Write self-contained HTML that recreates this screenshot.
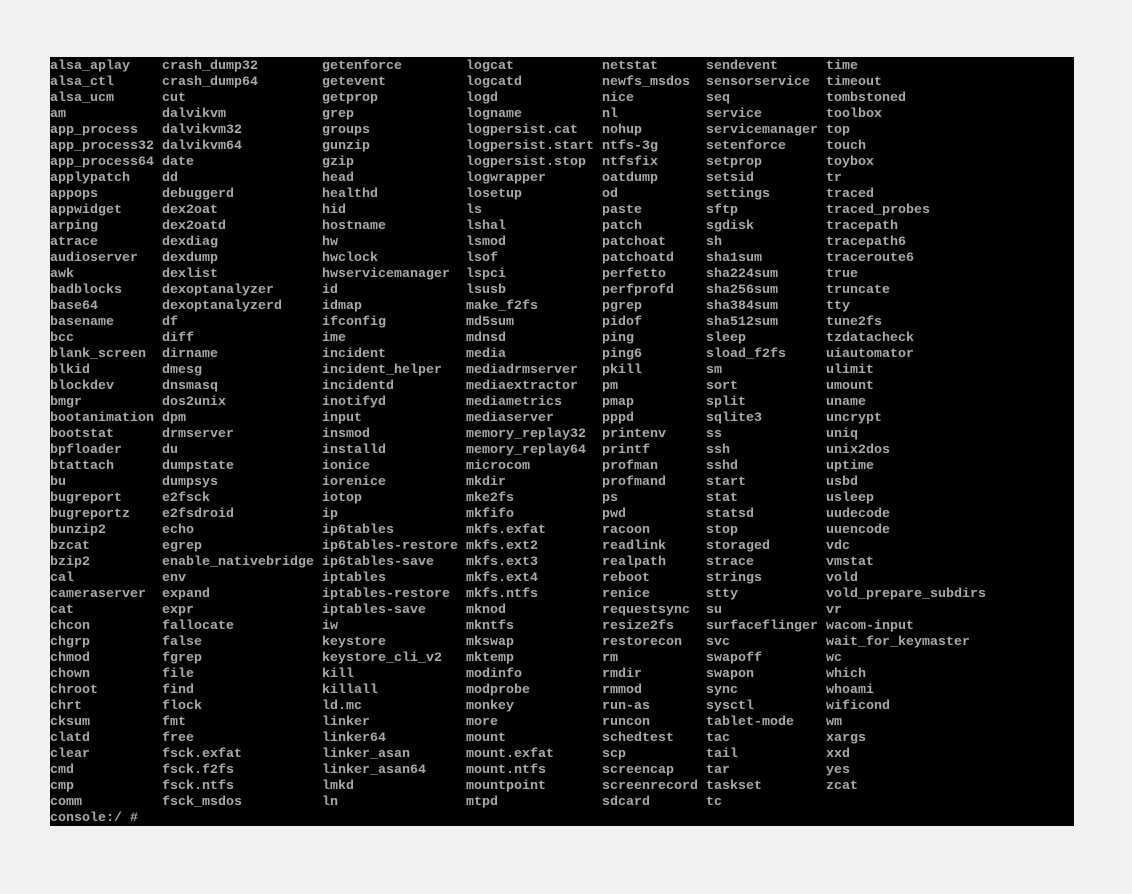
<!DOCTYPE html>
<html><head><meta charset="utf-8"><style>
html,body{margin:0;padding:0;background:#f0f0f0;width:1132px;height:894px;overflow:hidden}
#t{position:absolute;left:50px;top:57px;width:1024px;height:767px;padding-top:2px;background:#000;color:#aaa;font-family:"Liberation Mono","DejaVu Sans Mono",monospace;font-size:13.33px;line-height:16px;font-weight:bold}
.r{display:grid;grid-template-columns:112px 160px 144px 136px 104px 120px 200px;height:16px;white-space:pre}
</style></head><body><div id="t">
<div class="r"><span>alsa_aplay</span><span>crash_dump32</span><span>getenforce</span><span>logcat</span><span>netstat</span><span>sendevent</span><span>time</span></div>
<div class="r"><span>alsa_ctl</span><span>crash_dump64</span><span>getevent</span><span>logcatd</span><span>newfs_msdos</span><span>sensorservice</span><span>timeout</span></div>
<div class="r"><span>alsa_ucm</span><span>cut</span><span>getprop</span><span>logd</span><span>nice</span><span>seq</span><span>tombstoned</span></div>
<div class="r"><span>am</span><span>dalvikvm</span><span>grep</span><span>logname</span><span>nl</span><span>service</span><span>toolbox</span></div>
<div class="r"><span>app_process</span><span>dalvikvm32</span><span>groups</span><span>logpersist.cat</span><span>nohup</span><span>servicemanager</span><span>top</span></div>
<div class="r"><span>app_process32</span><span>dalvikvm64</span><span>gunzip</span><span>logpersist.start</span><span>ntfs-3g</span><span>setenforce</span><span>touch</span></div>
<div class="r"><span>app_process64</span><span>date</span><span>gzip</span><span>logpersist.stop</span><span>ntfsfix</span><span>setprop</span><span>toybox</span></div>
<div class="r"><span>applypatch</span><span>dd</span><span>head</span><span>logwrapper</span><span>oatdump</span><span>setsid</span><span>tr</span></div>
<div class="r"><span>appops</span><span>debuggerd</span><span>healthd</span><span>losetup</span><span>od</span><span>settings</span><span>traced</span></div>
<div class="r"><span>appwidget</span><span>dex2oat</span><span>hid</span><span>ls</span><span>paste</span><span>sftp</span><span>traced_probes</span></div>
<div class="r"><span>arping</span><span>dex2oatd</span><span>hostname</span><span>lshal</span><span>patch</span><span>sgdisk</span><span>tracepath</span></div>
<div class="r"><span>atrace</span><span>dexdiag</span><span>hw</span><span>lsmod</span><span>patchoat</span><span>sh</span><span>tracepath6</span></div>
<div class="r"><span>audioserver</span><span>dexdump</span><span>hwclock</span><span>lsof</span><span>patchoatd</span><span>sha1sum</span><span>traceroute6</span></div>
<div class="r"><span>awk</span><span>dexlist</span><span>hwservicemanager</span><span>lspci</span><span>perfetto</span><span>sha224sum</span><span>true</span></div>
<div class="r"><span>badblocks</span><span>dexoptanalyzer</span><span>id</span><span>lsusb</span><span>perfprofd</span><span>sha256sum</span><span>truncate</span></div>
<div class="r"><span>base64</span><span>dexoptanalyzerd</span><span>idmap</span><span>make_f2fs</span><span>pgrep</span><span>sha384sum</span><span>tty</span></div>
<div class="r"><span>basename</span><span>df</span><span>ifconfig</span><span>md5sum</span><span>pidof</span><span>sha512sum</span><span>tune2fs</span></div>
<div class="r"><span>bcc</span><span>diff</span><span>ime</span><span>mdnsd</span><span>ping</span><span>sleep</span><span>tzdatacheck</span></div>
<div class="r"><span>blank_screen</span><span>dirname</span><span>incident</span><span>media</span><span>ping6</span><span>sload_f2fs</span><span>uiautomator</span></div>
<div class="r"><span>blkid</span><span>dmesg</span><span>incident_helper</span><span>mediadrmserver</span><span>pkill</span><span>sm</span><span>ulimit</span></div>
<div class="r"><span>blockdev</span><span>dnsmasq</span><span>incidentd</span><span>mediaextractor</span><span>pm</span><span>sort</span><span>umount</span></div>
<div class="r"><span>bmgr</span><span>dos2unix</span><span>inotifyd</span><span>mediametrics</span><span>pmap</span><span>split</span><span>uname</span></div>
<div class="r"><span>bootanimation</span><span>dpm</span><span>input</span><span>mediaserver</span><span>pppd</span><span>sqlite3</span><span>uncrypt</span></div>
<div class="r"><span>bootstat</span><span>drmserver</span><span>insmod</span><span>memory_replay32</span><span>printenv</span><span>ss</span><span>uniq</span></div>
<div class="r"><span>bpfloader</span><span>du</span><span>installd</span><span>memory_replay64</span><span>printf</span><span>ssh</span><span>unix2dos</span></div>
<div class="r"><span>btattach</span><span>dumpstate</span><span>ionice</span><span>microcom</span><span>profman</span><span>sshd</span><span>uptime</span></div>
<div class="r"><span>bu</span><span>dumpsys</span><span>iorenice</span><span>mkdir</span><span>profmand</span><span>start</span><span>usbd</span></div>
<div class="r"><span>bugreport</span><span>e2fsck</span><span>iotop</span><span>mke2fs</span><span>ps</span><span>stat</span><span>usleep</span></div>
<div class="r"><span>bugreportz</span><span>e2fsdroid</span><span>ip</span><span>mkfifo</span><span>pwd</span><span>statsd</span><span>uudecode</span></div>
<div class="r"><span>bunzip2</span><span>echo</span><span>ip6tables</span><span>mkfs.exfat</span><span>racoon</span><span>stop</span><span>uuencode</span></div>
<div class="r"><span>bzcat</span><span>egrep</span><span>ip6tables-restore</span><span>mkfs.ext2</span><span>readlink</span><span>storaged</span><span>vdc</span></div>
<div class="r"><span>bzip2</span><span>enable_nativebridge</span><span>ip6tables-save</span><span>mkfs.ext3</span><span>realpath</span><span>strace</span><span>vmstat</span></div>
<div class="r"><span>cal</span><span>env</span><span>iptables</span><span>mkfs.ext4</span><span>reboot</span><span>strings</span><span>vold</span></div>
<div class="r"><span>cameraserver</span><span>expand</span><span>iptables-restore</span><span>mkfs.ntfs</span><span>renice</span><span>stty</span><span>vold_prepare_subdirs</span></div>
<div class="r"><span>cat</span><span>expr</span><span>iptables-save</span><span>mknod</span><span>requestsync</span><span>su</span><span>vr</span></div>
<div class="r"><span>chcon</span><span>fallocate</span><span>iw</span><span>mkntfs</span><span>resize2fs</span><span>surfaceflinger</span><span>wacom-input</span></div>
<div class="r"><span>chgrp</span><span>false</span><span>keystore</span><span>mkswap</span><span>restorecon</span><span>svc</span><span>wait_for_keymaster</span></div>
<div class="r"><span>chmod</span><span>fgrep</span><span>keystore_cli_v2</span><span>mktemp</span><span>rm</span><span>swapoff</span><span>wc</span></div>
<div class="r"><span>chown</span><span>file</span><span>kill</span><span>modinfo</span><span>rmdir</span><span>swapon</span><span>which</span></div>
<div class="r"><span>chroot</span><span>find</span><span>killall</span><span>modprobe</span><span>rmmod</span><span>sync</span><span>whoami</span></div>
<div class="r"><span>chrt</span><span>flock</span><span>ld.mc</span><span>monkey</span><span>run-as</span><span>sysctl</span><span>wificond</span></div>
<div class="r"><span>cksum</span><span>fmt</span><span>linker</span><span>more</span><span>runcon</span><span>tablet-mode</span><span>wm</span></div>
<div class="r"><span>clatd</span><span>free</span><span>linker64</span><span>mount</span><span>schedtest</span><span>tac</span><span>xargs</span></div>
<div class="r"><span>clear</span><span>fsck.exfat</span><span>linker_asan</span><span>mount.exfat</span><span>scp</span><span>tail</span><span>xxd</span></div>
<div class="r"><span>cmd</span><span>fsck.f2fs</span><span>linker_asan64</span><span>mount.ntfs</span><span>screencap</span><span>tar</span><span>yes</span></div>
<div class="r"><span>cmp</span><span>fsck.ntfs</span><span>lmkd</span><span>mountpoint</span><span>screenrecord</span><span>taskset</span><span>zcat</span></div>
<div class="r"><span>comm</span><span>fsck_msdos</span><span>ln</span><span>mtpd</span><span>sdcard</span><span>tc</span><span></span></div>
<div class="r"><span style="grid-column:1/8">console:/ #</span></div>
</div></body></html>
